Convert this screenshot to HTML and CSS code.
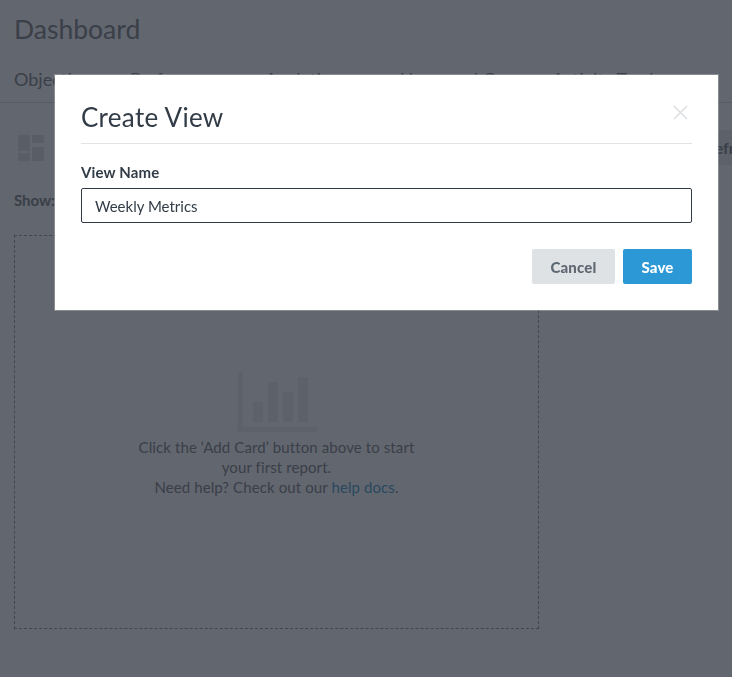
FILE: index.html
```html
<!doctype html>
<html>
<head>
    <meta charset="UTF-8">
    <title>Dashboard</title>
    <link rel="stylesheet" href="styles.css">
</head>
<body>
    <div class="page">
        <h1 class="page-title">Dashboard</h1>
        <nav class="tabs">
            <span>Objectives</span>
            <span>Performance</span>
            <span>Analytics</span>
            <span>Users and Groups</span>
            <span>Activity Tracker</span>
        </nav>
        <div class="toolbar">
            <svg class="grid-icon" width="26" height="26" viewBox="0 0 26 26">
                <rect x="0" y="0" width="12" height="16"/>
                <rect x="14" y="0" width="12" height="8"/>
                <rect x="0" y="18" width="12" height="8"/>
                <rect x="14" y="12" width="12" height="14"/>
            </svg>
            <button class="refresh">Refresh</button>
        </div>
        <div class="show-row">Show:</div>
        <div class="empty-card">
            <svg class="chart-icon" width="80" height="60" viewBox="0 0 80 60">
                <rect x="1" y="0" width="5" height="58"/>
                <rect x="0" y="55" width="80" height="5"/>
                <rect x="16" y="30" width="10" height="20"/>
                <rect x="31" y="10" width="10" height="40"/>
                <rect x="46" y="20" width="10" height="30"/>
                <rect x="61" y="5" width="10" height="45"/>
            </svg>
            <p>Click the ‘Add Card’ button above to start<br>your first report.<br>Need help? Check out our <a href="#">help docs</a>.</p>
        </div>
    </div>

    <div class="overlay"></div>

    <div class="modal">
        <div class="modal-head">
            <h2>Create View</h2>
            <svg class="close" width="15" height="15" viewBox="0 0 15 15">
                <path d="M1 1 L14 14 M14 1 L1 14"/>
            </svg>
        </div>
        <label class="field-label" for="view-name">View Name</label>
        <input class="field-input" id="view-name" type="text" value="Weekly Metrics">
        <div class="modal-actions">
            <button class="btn btn-cancel">Cancel</button>
            <button class="btn btn-save">Save</button>
        </div>
    </div>
</body>
</html>
```
FILE: styles.css
```css
html, body {
    height: 100%;
}
body {
    margin: 0;
    background-color: #fff;
    color: #6f7278;
    font-family: "Lato", "Liberation Sans", sans-serif;
    overflow: hidden;
}

/* page behind the dialog */
.page {
    padding: 0 0 0 14px;
}
.page-title {
    margin: 0;
    padding-top: 13px;
    font-size: 26.5px;
    line-height: 32px;
    font-weight: 400;
}
.tabs {
    display: flex;
    margin: 0 0 0 -14px;
    padding: 23px 0 0 14px;
    height: 34px;
    font-size: 18px;
    line-height: 22px;
    border-bottom: 1px solid #d4d6da;
}
.tabs span:nth-child(1) { width: 116px; }
.tabs span:nth-child(2) { width: 135px; }
.tabs span:nth-child(3) { width: 135px; }
.tabs span:nth-child(4) { width: 152px; }

.toolbar {
    display: flex;
    justify-content: space-between;
    align-items: center;
    height: 35px;
    margin-top: 27px;
    padding-left: 4px;
}
.grid-icon rect {
    fill: #dcdee1;
}
.refresh {
    width: 76px;
    height: 35px;
    margin-right: -38px;
    padding: 0;
    border: 0;
    border-radius: 3px;
    background-color: #eceef0;
    color: #6f7278;
    font: 700 16px "Lato", sans-serif;
}
.show-row {
    margin-top: 25px;
    font-size: 15px;
    line-height: 20px;
    font-weight: 700;
}
.empty-card {
    box-sizing: border-box;
    width: 525px;
    height: 394px;
    margin-top: 25px;
    padding-top: 136px;
    border: 1px dashed #8b8c90;
    text-align: center;
}
.chart-icon {
    display: block;
    margin: 0 auto 5px;
}
.chart-icon rect {
    fill: #ebedef;
}
.empty-card p {
    margin: 0;
    font-size: 15px;
    line-height: 20px;
    letter-spacing: 0.1px;
}
.empty-card a {
    color: #2f93c4;
    text-decoration: none;
}

.overlay {
    position: fixed;
    top: 0;
    right: 0;
    bottom: 0;
    left: 0;
    background-color: rgba(37, 43, 54, 0.72);
}

/* dialog */
.modal {
    position: fixed;
    top: 75px;
    left: 55px;
    box-sizing: border-box;
    width: 663px;
    height: 235px;
    padding: 0 26px;
    background-color: #fff;
    color: #323c47;
    box-shadow: 0 0 0 1px rgba(255, 255, 255, 0.25);
}
.modal-head {
    display: flex;
    justify-content: space-between;
    align-items: flex-start;
    height: 68px;
    border-bottom: 1px solid #e1e3e5;
}
.modal-head h2 {
    margin: 0;
    padding-top: 27px;
    font-size: 26px;
    line-height: 31px;
    font-weight: 400;
    letter-spacing: 0.3px;
}
.close {
    margin: 30px 4px 0 0;
}
.close path {
    fill: none;
    stroke: #dcdfe2;
    stroke-width: 1.5;
}
.field-label {
    display: block;
    margin-top: 19px;
    font-size: 15px;
    line-height: 18px;
    font-weight: 700;
    letter-spacing: 0.15px;
}
.field-input {
    display: block;
    box-sizing: border-box;
    width: 100%;
    height: 35px;
    margin-top: 7px;
    padding: 0 13px;
    border: 1px solid #323c47;
    border-radius: 2px;
    outline: none;
    color: #323c47;
    font: 400 15px "Lato", sans-serif;
}
.modal-actions {
    display: flex;
    justify-content: flex-end;
    gap: 8px;
    margin-top: 26px;
}
.btn {
    height: 35px;
    padding: 0;
    border: 0;
    border-radius: 2px;
    font: 900 15px "Lato", sans-serif;
    letter-spacing: 0.2px;
}
.btn-cancel {
    width: 83px;
    background-color: #dfe2e5;
    color: #5f6974;
}
.btn-save {
    width: 69px;
    background-color: #2d98d6;
    color: #fff;
}
```
